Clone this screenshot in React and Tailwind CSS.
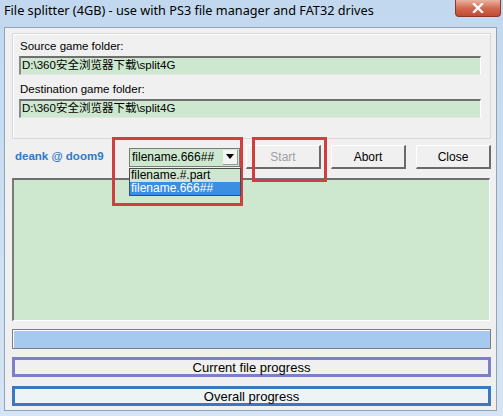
import React from 'react';

const ui = { fontFamily: '"Liberation Sans", "Noto Sans CJK SC", sans-serif' };
const title = { fontFamily: '"Noto Sans", "Open Sans", sans-serif' };

function Field({ label }) {
  return (
    <div className="flex flex-col">
      <div className="h-[22px] flex items-end pb-[4px] pl-[1px] text-[11.5px] text-black leading-none">{label}</div>
      <div className="h-[19px] bg-[#cde8cf] border-t-2 border-l-2 border-t-[#6f6f6f] border-l-[#8a8a8a] border-r border-b border-r-white border-b-[#e6e6e6] flex items-center pl-[1px] text-[11.5px] leading-none text-black">
        {'D:\\360安全浏览器下载\\split4G'}
      </div>
    </div>
  );
}

function Btn({ children, disabled }) {
  return (
    <div className={`w-[75px] h-[24px] bg-[#f0f0f0] border-t border-l border-t-white border-l-white border-r-2 border-b-2 border-r-[#6a6a6a] border-b-[#6a6a6a] flex items-center justify-center text-[12px] leading-none ${disabled ? 'text-[#a0a0a0]' : 'text-black'}`}>
      {children}
    </div>
  );
}

export default function App() {
  return (
    <div className="w-[503px] h-[416px] bg-gradient-to-b from-[#c2d8ef] to-[#d6e5f5] flex flex-col overflow-hidden" style={ui}>
      {/* Title bar */}
      <div className="h-[27px] flex items-start justify-between">
        <span className="pl-[4px] pt-[1px] text-[12.7px] text-black" style={title}>
          File splitter (4GB) - use with PS3 file manager and FAT32 drives
        </span>
        <div className="mr-[2px] w-[46px] h-[17px] rounded-b-[4px] border border-t-0 border-[#8a3a2c] bg-gradient-to-b from-[#eab3a2] via-[#d26a52] to-[#c44a32] flex items-center justify-center">
          <svg width="12" height="10" viewBox="0 0 12 10">
            <path d="M2 1 L10 9 M10 1 L2 9" stroke="#fff" strokeWidth="2.4" strokeLinecap="square" />
          </svg>
        </div>
      </div>

      {/* Client area */}
      <div className="mx-[4px] mr-[6px] h-[384px] bg-[#f0f0f0] border border-[#8ea4bd] flex flex-col pl-[7px] pr-[5px] relative">
        {/* Group box */}
        <div className="mt-[5px] h-[106px] border border-[#d5d9dd] shadow-[inset_1px_1px_0_#ffffff] px-[6px] pr-[9px] flex flex-col gap-[2px]">
          <Field label="Source game folder:" />
          <Field label="Destination game folder:" />
        </div>

        {/* Controls row */}
        <div className="mt-[6px] h-[24px] flex items-center">
          <div className="w-[117px] pl-[3px] text-[11.5px] font-bold text-[#2f7bc4]">deank @ doom9</div>
          <div className="w-[111px] h-[19px] bg-[#cde8cf] border border-[#7a7a7a] flex items-center relative">
            <span className="pl-[2px] text-[12px] leading-none text-black">filename.666##</span>
            <div className="ml-auto mr-[1px] w-[15px] h-[15px] bg-[#f4f4f4] border-r border-b border-[#9a9a9a] flex items-center justify-center">
              <svg width="8" height="5" viewBox="0 0 8 5"><path d="M0 0 H8 L4 5 Z" fill="#000" /></svg>
            </div>
            {/* dropdown list */}
            <div className="absolute left-[-1px] top-[19px] w-[112px] border border-[#4a4a4a] bg-[#cde8cf] z-10">
              <div className="h-[13px] pl-[1px] flex items-center text-[12px] leading-none text-black">filename.#.part</div>
              <div className="h-[13px] pl-[1px] flex items-center text-[12px] leading-none text-white bg-[#3c8ee0]">filename.666##</div>
            </div>
          </div>
          <div className="ml-[6px] flex gap-[10px]">
            <Btn disabled>Start</Btn>
            <Btn>Abort</Btn>
            <Btn>Close</Btn>
          </div>
        </div>

        {/* Log area */}
        <div className="mt-[9px] h-[143px] bg-[#cde8cf] border-t-2 border-l-2 border-t-[#6f6f6f] border-l-[#7a7a7a] border-r border-b border-r-white border-b-white mr-[1px]" />

        {/* Blue bar */}
        <div className="mt-[8px] h-[20px] border border-[#7d7d7d] shadow-[inset_1px_1px_0_#ffffff] bg-[#a6caef]" />

        {/* Current file progress */}
        <div className="mt-[8px] h-[20px] border-[3px] border-[#7c80c8] bg-[#f0f0f0] flex items-center justify-center text-[13px] leading-none text-black">
          Current file progress
        </div>

        {/* Overall progress */}
        <div className="mt-[9px] h-[20px] border-[3px] border-[#3a78c2] bg-[#eef3f6] flex items-center justify-center text-[13px] leading-none text-black">
          Overall progress
        </div>

        {/* Red annotation boxes */}
        <div className="absolute left-[107px] top-[109px] w-[131px] h-[69px] border-[3px] border-[#cf3f3f] pointer-events-none" />
        <div className="absolute left-[247px] top-[109px] w-[75px] h-[45px] border-[3px] border-[#cf3f3f] pointer-events-none" />
      </div>
    </div>
  );
}
